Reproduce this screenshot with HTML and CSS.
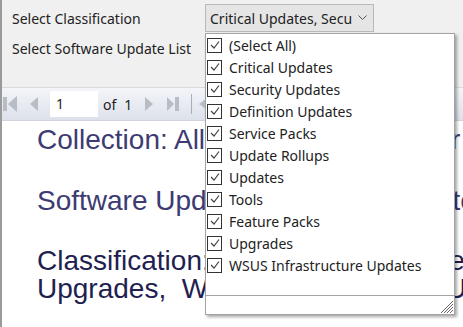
FILE: index.html
```html
<!DOCTYPE html>
<html lang="en">
<head>
  <meta charset="UTF-8">
  <title>Software Updates Report</title>
  <link rel="stylesheet" href="styles.css">
</head>
<body>
  <div class="viewer">
    <div class="params">
      <label class="param-label">Select Classification</label>
      <div class="select">
        <span class="select-text">Critical Updates, Secu</span>
        <svg class="chevron" width="9" height="6" viewBox="0 0 9 6"><polyline points="0.5,0.5 4.5,4.5 8.5,0.5" fill="none" stroke="#555" stroke-width="1"/></svg>
      </div>
      <label class="param-label">Select Software Update List</label>
      <div class="select"></div>
    </div>

    <div class="toolbar">
      <svg class="tb-icon first" width="16" height="16" viewBox="0 0 16 16"><rect x="0" y="1" width="4" height="14" fill="#b7bcc5"/><polygon points="14,0 14,16 5,8" fill="#b7bcc5"/></svg>
      <svg class="tb-icon prev" width="8" height="16" viewBox="0 0 8 16"><polygon points="8,1 8,15 0,8" fill="#b7bcc5"/></svg>
      <div class="page-box">1</div>
      <span class="of">of</span>
      <span class="total">1</span>
      <svg class="tb-icon next" width="8" height="16" viewBox="0 0 8 16"><polygon points="0,1 0,15 8,8" fill="#b7bcc5"/></svg>
      <svg class="tb-icon last" width="12" height="16" viewBox="0 0 12 16"><polygon points="0,1 0,15 7,8" fill="#b7bcc5"/><rect x="8" y="1" width="4" height="14" fill="#b7bcc5"/></svg>
      <span class="tb-sep"></span>
      <svg class="tb-icon back" width="8" height="16" viewBox="0 0 8 16"><polygon points="8,2 8,14 0,8" fill="#b7bcc5"/></svg>
    </div>

    <div class="report">
      <div class="report-title">Collection: All Desktop and Server Clients</div>
      <div class="report-title">Software Update List: Monthly Patches</div>
      <div class="report-title dark">Classification: Critical Updates, Security Updates, Upgrades,&nbsp; WSUS Infrastructure Updates</div>
    </div>

    <div class="dropdown">
      <ul class="options">
        <li><span class="box"><svg width="12" height="12" viewBox="0 0 12 12"><polyline points="2,6 5,9 10,2.5" fill="none" stroke="#444" stroke-width="1.2"/></svg></span>(Select All)</li>
        <li><span class="box"><svg width="12" height="12" viewBox="0 0 12 12"><polyline points="2,6 5,9 10,2.5" fill="none" stroke="#444" stroke-width="1.2"/></svg></span>Critical Updates</li>
        <li><span class="box"><svg width="12" height="12" viewBox="0 0 12 12"><polyline points="2,6 5,9 10,2.5" fill="none" stroke="#444" stroke-width="1.2"/></svg></span>Security Updates</li>
        <li><span class="box"><svg width="12" height="12" viewBox="0 0 12 12"><polyline points="2,6 5,9 10,2.5" fill="none" stroke="#444" stroke-width="1.2"/></svg></span>Definition Updates</li>
        <li><span class="box"><svg width="12" height="12" viewBox="0 0 12 12"><polyline points="2,6 5,9 10,2.5" fill="none" stroke="#444" stroke-width="1.2"/></svg></span>Service Packs</li>
        <li><span class="box"><svg width="12" height="12" viewBox="0 0 12 12"><polyline points="2,6 5,9 10,2.5" fill="none" stroke="#444" stroke-width="1.2"/></svg></span>Update Rollups</li>
        <li><span class="box"><svg width="12" height="12" viewBox="0 0 12 12"><polyline points="2,6 5,9 10,2.5" fill="none" stroke="#444" stroke-width="1.2"/></svg></span>Updates</li>
        <li><span class="box"><svg width="12" height="12" viewBox="0 0 12 12"><polyline points="2,6 5,9 10,2.5" fill="none" stroke="#444" stroke-width="1.2"/></svg></span>Tools</li>
        <li><span class="box"><svg width="12" height="12" viewBox="0 0 12 12"><polyline points="2,6 5,9 10,2.5" fill="none" stroke="#444" stroke-width="1.2"/></svg></span>Feature Packs</li>
        <li><span class="box"><svg width="12" height="12" viewBox="0 0 12 12"><polyline points="2,6 5,9 10,2.5" fill="none" stroke="#444" stroke-width="1.2"/></svg></span>Upgrades</li>
        <li><span class="box"><svg width="12" height="12" viewBox="0 0 12 12"><polyline points="2,6 5,9 10,2.5" fill="none" stroke="#444" stroke-width="1.2"/></svg></span>WSUS Infrastructure Updates</li>
      </ul>
      <div class="dropdown-foot">
        <svg class="grip" width="13" height="13" viewBox="0 0 13 13">
          <line x1="13" y1="1" x2="1" y2="13" stroke="#666" stroke-width="1"/>
          <line x1="13" y1="4" x2="4" y2="13" stroke="#666" stroke-width="1"/>
          <line x1="13" y1="7" x2="7" y2="13" stroke="#666" stroke-width="1"/>
          <line x1="13" y1="10" x2="10" y2="13" stroke="#666" stroke-width="1"/>
        </svg>
      </div>
    </div>
  </div>
</body>
</html>
```

FILE: styles.css
```css
body {
  margin: 0;
  font-family: "Noto Sans", "Open Sans", sans-serif;
  background: #fff;
  overflow: hidden;
}
.viewer {
  position: relative;
  width: 461px;
  height: 327px;
  border-left: 2px solid #9a9a9a;
  overflow: hidden;
}
.params {
  background: #f0f0f0;
  height: 84px;
  padding: 3px 0 0 10px;
  display: grid;
  grid-template-columns: 193px 169px;
  grid-auto-rows: 30px;
  align-items: center;
  align-content: start;
  border-bottom: 1px solid #dadada;
}
.param-label {
  font-size: 14px;
  color: #222;
}
.select {
  height: 26px;
  background: #e5e5e5;
  border: 1px solid #b9b9b9;
  display: flex;
  align-items: center;
  padding: 0 6px 0 4px;
  font-size: 14px;
  color: #222;
}
.select-text {
  flex: 1;
  white-space: nowrap;
  overflow: hidden;
}
.chevron {
  margin-left: 4px;
}
.toolbar {
  height: 32px;
  background: linear-gradient(#f3f5f9, #dde1ea);
  border-bottom: 1px solid #d0d4dc;
  display: flex;
  align-items: center;
  font-size: 14px;
  color: #222;
}
.first {
  margin-left: 1px;
}
.prev {
  margin-left: 11px;
}
.page-box {
  margin-left: 12px;
  width: 42px;
  height: 26px;
  background: #fff;
  padding-left: 6px;
  line-height: 26px;
}
.of {
  margin-left: 5px;
}
.total {
  margin-left: 8px;
}
.next {
  margin-left: 13px;
}
.last {
  margin-left: 14px;
}
.tb-sep {
  margin-left: 12px;
  width: 1px;
  height: 20px;
  background: #a9aeb8;
}
.back {
  margin-left: 7px;
}
.report {
  padding: 5px 0 0 35px;
  font-family: "Liberation Sans", Arial, sans-serif;
  width: 660px;
}
.report-title {
  font-size: 28px;
  line-height: 28px;
  color: #3d3b72;
  margin-top: 33px;
}
.report-title:first-child {
  margin-top: 0;
}
.report-title.dark {
  color: #221f50;
  margin-top: 32px;
}
.dropdown {
  position: absolute;
  left: 203px;
  top: 33px;
  width: 248px;
  height: 280px;
  background: #fff;
  border: 1px solid #a3a3a3;
  box-shadow: 2px 2px 3px rgba(0, 0, 0, 0.35);
  display: flex;
  flex-direction: column;
}
.options {
  list-style: none;
  margin: 0;
  padding: 0 0 0 1px;
  flex: 1;
}
.options li {
  height: 22px;
  display: flex;
  align-items: center;
  font-size: 14px;
  color: #222;
  white-space: nowrap;
}
.box {
  width: 13px;
  height: 13px;
  border: 1px solid #333;
  margin-right: 7px;
  display: flex;
  align-items: center;
  justify-content: center;
}
.dropdown-foot {
  height: 17px;
  border-top: 1px solid #a3a3a3;
  display: flex;
  justify-content: flex-end;
  align-items: flex-end;
  padding: 0 1px 1px 0;
}
```
